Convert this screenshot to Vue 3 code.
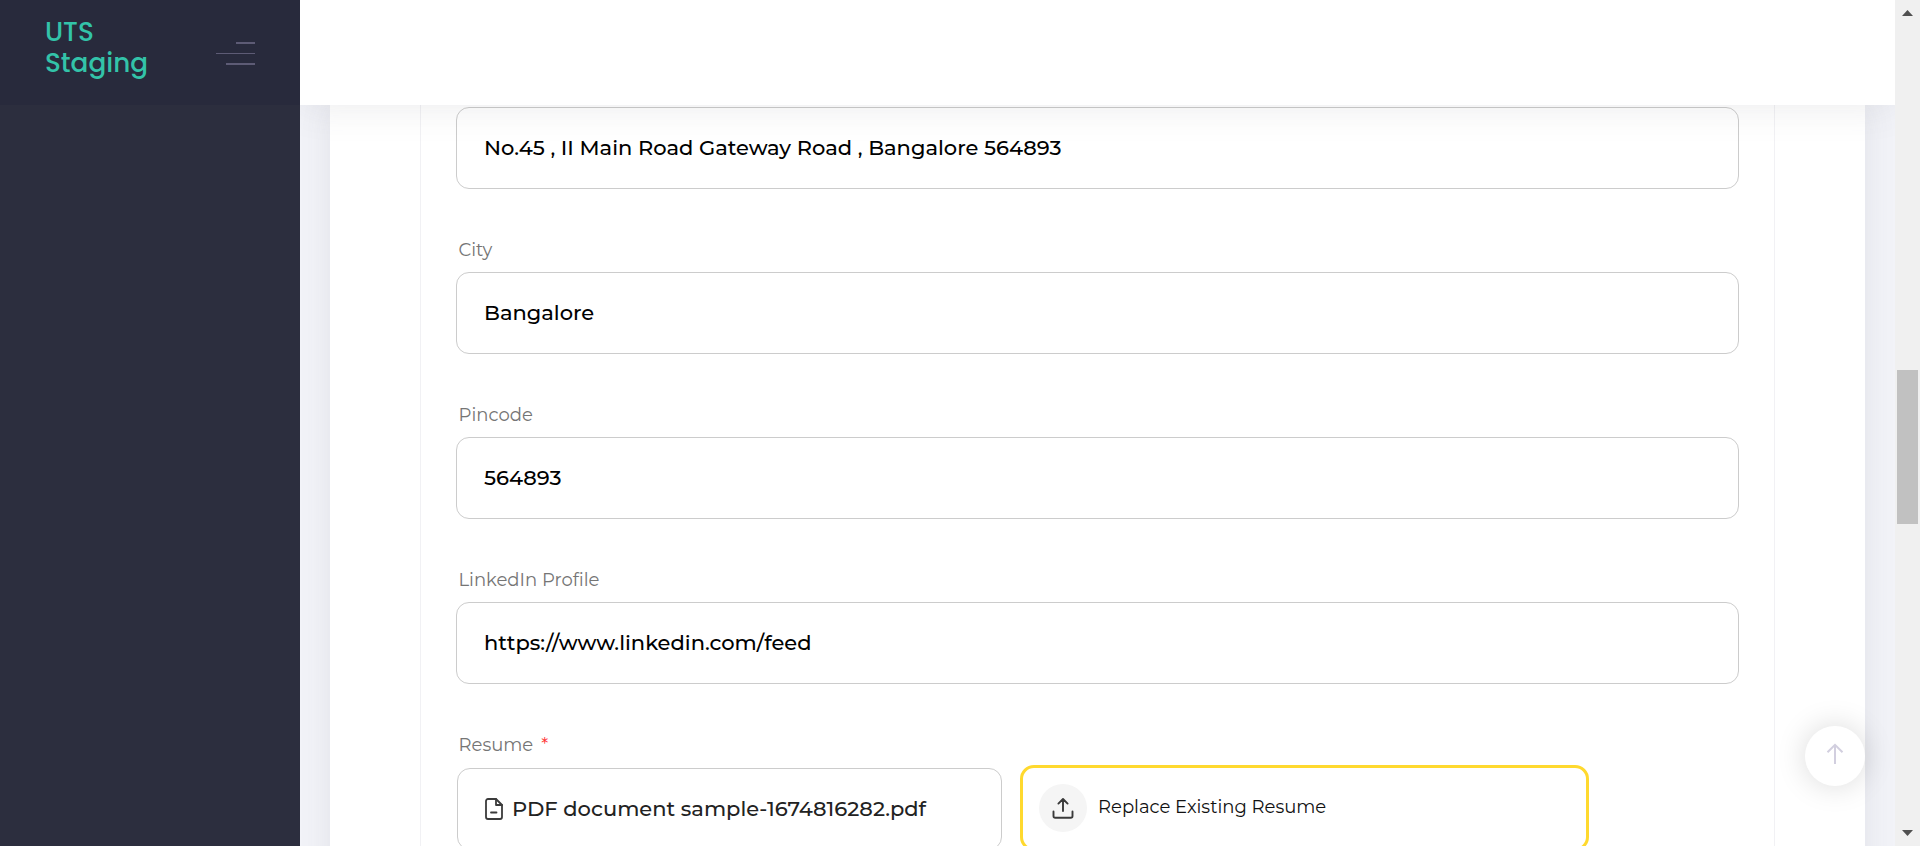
<script setup>
const fields = [
  { label: 'Address', value: 'No.45 , II Main Road Gateway Road , Bangalore 564893', cls: 'address' },
  { label: 'City', value: 'Bangalore', cls: 'city' },
  { label: 'Pincode', value: '564893', cls: 'pincode' },
  { label: 'LinkedIn Profile', value: 'https://www.linkedin.com/feed', cls: 'linkedin' },
]
</script>

<template>
  <div class="page">
    <aside class="sidebar">
      <div class="brand">
        <div class="logo">UTS<br>Staging</div>
        <div class="burger"><i class="short"></i><i class="long"></i><i class="mid"></i></div>
      </div>
    </aside>
    <main class="main">
      <header class="topbar"></header>
      <section class="card">
        <div class="panel">
          <div v-for="f in fields" :key="f.cls" class="field" :class="f.cls">
            <label v-if="f.cls !== 'address'">{{ f.label }}</label>
            <div class="input">{{ f.value }}</div>
          </div>
          <div class="field resume">
            <label>Resume<b class="req">*</b></label>
            <div class="files">
              <div class="file">
                <svg width="18" height="22" viewBox="0 0 18 22" fill="none" stroke="#3b3b3b" stroke-width="1.800" stroke-linejoin="round" stroke-linecap="round"><path d="M11 1H3a2 2 0 0 0-2 2v16a2 2 0 0 0 2 2h12a2 2 0 0 0 2-2V7z" /><path d="M11 1v6h6M6 14.500h5.500" /></svg>
                <span>PDF document sample-1674816282.pdf</span>
              </div>
              <div class="replace">
                <div class="circle">
                  <svg width="22" height="22" viewBox="0 0 22 22" fill="none" stroke="#3a3a3a" stroke-width="1.900" stroke-linecap="round" stroke-linejoin="round"><path d="M11 14V2.200M6.400 6.600 11 2l4.600 4.600M1.500 14.500v4.500a1.800 1.800 0 0 0 1.800 1.800h15.400a1.800 1.800 0 0 0 1.800-1.800v-4.500" /></svg>
                </div>
                <span>Replace Existing Resume</span>
              </div>
            </div>
          </div>
        </div>
      </section>
      <button class="to-top">
        <svg width="18" height="22" viewBox="0 0 18 22" fill="none" stroke="#d2cfdf" stroke-width="2"><path d="M9 21V2M1.500 9.300 9 1.800l7.500 7.500" /></svg>
      </button>
    </main>
    <div class="scrollbar">
      <svg width="11" height="6" viewBox="0 0 11 6"><path d="M0 6h11L5.500 0z" fill="#505050" /></svg>
      <div class="thumb"></div>
      <svg width="11" height="6" viewBox="0 0 11 6"><path d="M0 0h11L5.500 6z" fill="#505050" /></svg>
    </div>
  </div>
</template>

<style>
body { overflow: hidden; }
</style>
<style scoped>
* { box-sizing: border-box; }
.page { display: flex; width: 1920px; height: 846px; overflow: hidden; font-family: Montserrat, Inter, sans-serif; background: #f2f3f8; }
.sidebar { flex: none; width: 300px; background: #2c2e3e; position: relative; z-index: 3; }
.brand { height: 105px; background: #282a3c; display: flex; justify-content: space-between; padding: 16px 45px 0 45px; }
.logo { color: #33c3a9; font-family: Poppins, Inter, sans-serif; font-weight: 500; font-size: 26.250px; line-height: 31px; }
.burger { display: flex; flex-direction: column; align-items: flex-end; padding-top: 26px; }
.burger i { background: #5d5b75; height: 2px; }
.burger .short { width: 19px; }
.burger .long { width: 39px; height: 1px; margin: 9px 0; }
.burger .mid { width: 29px; }
.main { flex: none; width: 1595px; height: 846px; padding: 0 30px; position: relative; overflow: hidden; }
.topbar { position: relative; z-index: 2; height: 105px; margin: 0 -30px; background: #fff; box-shadow: 0 0 40px rgba(82, 82, 92, .12); }
.card { background: #fff; height: 900px; padding: 0 90px; box-shadow: 0 0 30px rgba(82, 82, 92, .1); }
.panel { height: 100%; border: 1px solid #f1f1f4; border-width: 0 1px; padding: 2px 35px 0; }
.field { height: 165px; padding-top: 49px; }
.field label { display: flex; height: 34px; padding-left: 2.500px; font-size: 18px; line-height: 24px; font-weight: 400; color: #757575; }
.field.address { height: 82px; padding: 0; }
.input { height: 82px; border: 1px solid #ccc; border-radius: 13px; padding-left: 27px; font-size: 21px; font-weight: 500; line-height: 80px; color: #000; }
.req { color: #f33; font-weight: 400; margin-left: 8px; }
.files { display: flex; align-items: flex-start; gap: 18px; margin-left: 1px; margin-top: -2px; }
.file { display: flex; align-items: center; width: 545px; height: 82px; margin-top: 3px; border: 1px solid #ccc; border-radius: 13px; padding-left: 27px; font-size: 21px; font-weight: 500; color: #222; }
.file span { padding-left: 9px; margin-top: -2px; }
.replace { display: flex; align-items: center; width: 569px; height: 86px; border: 3px solid #ffd92e; border-radius: 14px; padding-left: 16px; font-size: 18px; font-weight: 400; color: #111; }
.circle { display: flex; align-items: center; justify-content: center; width: 48px; height: 48px; border-radius: 50%; background: #f5f5f5; }
.replace span { padding-left: 11px; margin-top: -2px; }
.to-top { position: absolute; z-index: 2; left: 1505px; top: 726px; width: 60px; height: 60px; border: 0; border-radius: 50%; background: #fff; box-shadow: 0 0 30px rgba(0, 0, 0, .150); display: flex; align-items: center; justify-content: center; padding: 0 0 4px; }
.scrollbar { flex: none; width: 25px; height: 846px; background: #f0f0f0; display: flex; flex-direction: column; align-items: center; padding: 10px 0; position: relative; z-index: 3; }
.thumb { width: 21px; height: 154px; background: #c1c1c1; margin: 354px 0 auto; }
</style>
